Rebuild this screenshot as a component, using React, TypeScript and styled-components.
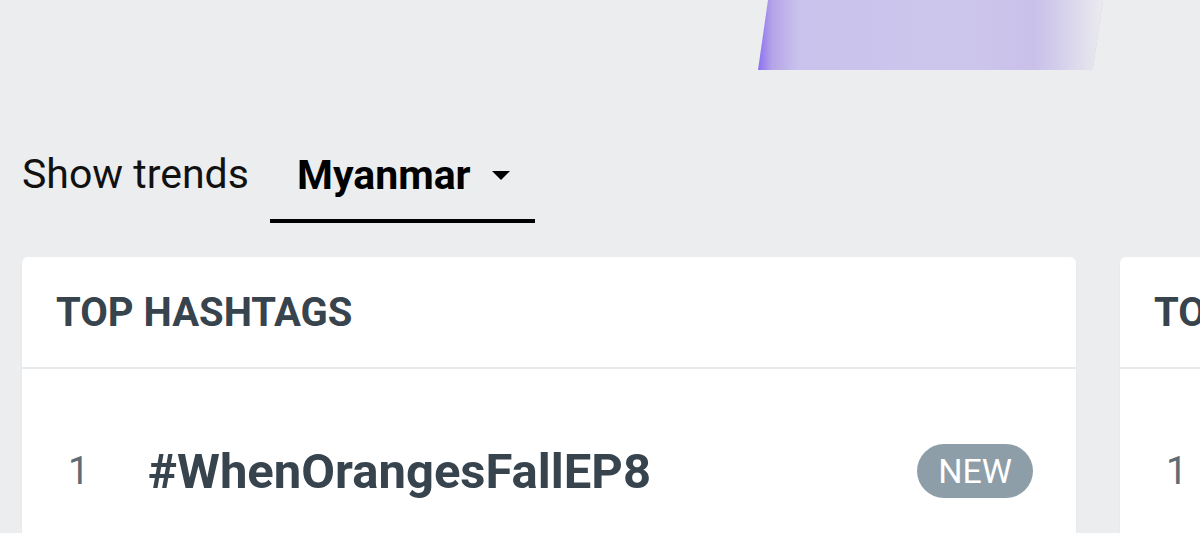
import React from "react";
import styled, { createGlobalStyle } from "styled-components";

const Global = createGlobalStyle`
  html, body { margin: 0; padding: 0; }
  body {
    background: #ecedef;
    font-family: Roboto, "Noto Sans", sans-serif;
    width: 1200px;
    height: 533px;
    overflow: hidden;
  }
`;

const Page = styled.div`
  display: flex;
  flex-direction: column;
  padding-left: 22px;
  width: 1200px;
  height: 533px;
  box-sizing: border-box;
  overflow: hidden;
`;

const BannerRow = styled.div`
  display: flex;
  height: 70px;
  padding-left: 736px;
`;

const Banner = styled.div`
  width: 345px;
  height: 70px;
  clip-path: polygon(10px 0, 100% 0, 97% 100%, 0 100%);
  background:
    linear-gradient(90deg, rgba(236,237,239,0) 80%, rgba(236,237,239,0.95) 100%),
    linear-gradient(90deg, #8b6ff0 0px, #b5a4e8 14px, #c9c2ec 40px, #cdc6ec 60%, #c8bfe9 85%);
`;

const TrendsRow = styled.div`
  display: flex;
  align-items: flex-end;
  margin-top: 70px;
  height: 83px;
  flex: none;
`;

const Label = styled.span`
  font-size: 41px;
  color: #111;
  width: 248px;
  line-height: 1;
  padding-bottom: 28px;
`;

const Tab = styled.div`
  display: flex;
  align-items: center;
  width: 265px;
  box-sizing: border-box;
  padding: 0 0 23px 27px;
  border-bottom: 4px solid #000;
  gap: 21px;
`;

const TabText = styled.span`
  font-size: 41px;
  font-weight: 700;
  color: #000;
  line-height: 1;
`;

const Cards = styled.div`
  display: flex;
  gap: 44px;
  margin-top: 34px;
  flex: none;
`;

const Card = styled.div`
  flex: 0 0 1054px;
  background: #fff;
  border-radius: 6px;
  box-shadow: 0 1px 2px rgba(0,0,0,0.06);
  height: 320px;
`;

const CardHeader = styled.div`
  height: 112px;
  box-sizing: border-box;
  display: flex;
  align-items: center;
  padding-left: 34px;
  border-bottom: 2px solid #e9eaec;
  overflow: hidden;
`;

const CardTitle = styled.h2`
  margin: 0;
  font-size: 40px;
  font-weight: 700;
  color: #37434d;
  white-space: nowrap;
`;

const Row = styled.div`
  display: flex;
  align-items: center;
  height: 204px;
  padding: 0 43px 0 46px;
  box-sizing: border-box;
`;

const Rank = styled.span`
  font-size: 38px;
  color: #5f6c75;
  width: 80px;
`;

const Tag = styled.span`
  font-size: 49px;
  font-weight: 700;
  color: #37434d;
  flex: 1;
  white-space: nowrap;
`;

const Badge = styled.span`
  background: #8e9ea8;
  color: #fff;
  font-size: 34px;
  border-radius: 28px;
  height: 54px;
  padding: 0 21px;
  display: flex;
  align-items: center;
`;

export default function App() {
  return (
    <>
      <Global />
      <Page>
        <BannerRow>
          <Banner />
        </BannerRow>
        <TrendsRow>
          <Label>Show trends</Label>
          <Tab>
            <TabText>Myanmar</TabText>
            <svg width="18" height="10" viewBox="0 0 18 10">
              <path d="M0 0 L18 0 L9 9 Z" fill="#000" />
            </svg>
          </Tab>
        </TrendsRow>
        <Cards>
          <Card>
            <CardHeader>
              <CardTitle>TOP HASHTAGS</CardTitle>
            </CardHeader>
            <Row>
              <Rank>1</Rank>
              <Tag>#WhenOrangesFallEP8</Tag>
              <Badge>NEW</Badge>
            </Row>
          </Card>
          <Card>
            <CardHeader>
              <CardTitle>TOP TOPICS</CardTitle>
            </CardHeader>
            <Row>
              <Rank>1</Rank>
            </Row>
          </Card>
        </Cards>
      </Page>
    </>
  );
}
